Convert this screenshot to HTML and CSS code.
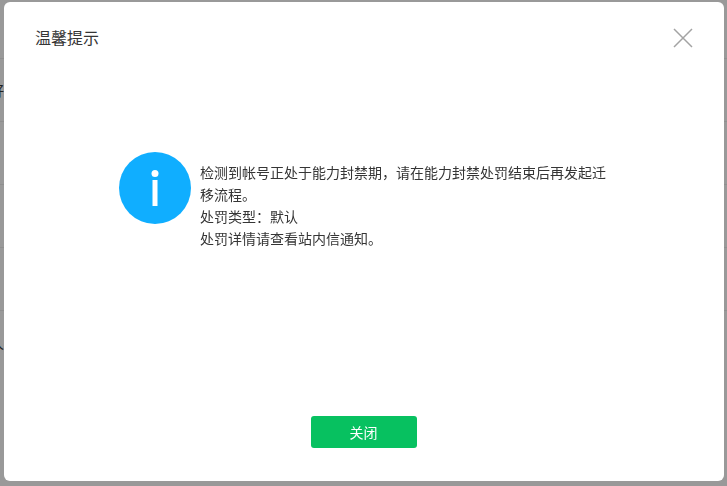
FILE: index.html
```html
<!DOCTYPE html>
<html lang="zh-CN">
<head>
<meta charset="utf-8">
<title>温馨提示</title>
<link rel="stylesheet" href="styles.css">
</head>
<body>
<div class="backdrop">
  <div class="backdrop-row"><span class="backdrop-glyph">好</span></div>
  <div class="backdrop-row"></div>
  <div class="backdrop-row"></div>
  <div class="backdrop-row"></div>
  <div class="backdrop-row"><span class="backdrop-glyph backdrop-glyph-low">人</span></div>
</div>
<div class="overlay">
  <section class="dialog">
    <header class="dialog-head">
      <h3 class="dialog-title">温馨提示</h3>
      <button class="dialog-close" aria-label="关闭">
        <svg width="20" height="20" viewBox="0 0 20 20"><path d="M1 1L19 19M19 1L1 19" stroke="#a3a3a3" stroke-width="1.5" fill="none"/></svg>
      </button>
    </header>
    <div class="dialog-body">
      <div class="info-icon">
        <svg width="72" height="72" viewBox="0 0 72 72"><circle cx="36" cy="36" r="36" fill="#10aeff"/><circle cx="36" cy="21.5" r="3.5" fill="#fff"/><rect x="33.5" y="28" width="5" height="26" fill="#fff"/></svg>
      </div>
      <div class="message">
        <p>检测到帐号正处于能力封禁期，请在能力封禁处罚结束后再发起迁移流程。</p>
        <p>处罚类型：默认</p>
        <p>处罚详情请查看站内信通知。</p>
      </div>
    </div>
    <footer class="dialog-foot">
      <button class="btn-primary">关闭</button>
    </footer>
  </section>
</div>
</body>
</html>
```
FILE: styles.css
```css
html, body {
  margin: 0;
  height: 100%;
  overflow: hidden;
}
body {
  background: #999;
  font-family: "Microsoft YaHei", "Noto Sans CJK SC", "Liberation Sans", sans-serif;
}
.backdrop {
  padding-top: 58px;
}
.backdrop-row {
  height: 62px;
  border-top: 1px solid #8f8f8f;
  position: relative;
}
.backdrop-glyph {
  position: absolute;
  left: -10px;
  top: 21px;
  font-size: 14px;
  line-height: 20px;
  color: #222;
}
.backdrop-glyph-low {
  top: 22px;
}
.overlay {
  position: fixed;
  inset: 0;
  padding: 2px 3px 5px 4px;
}
.dialog {
  height: 100%;
  box-sizing: border-box;
  background: #fff;
  border-radius: 6px;
  display: flex;
  flex-direction: column;
}
.dialog-head {
  display: flex;
  justify-content: space-between;
  align-items: flex-start;
  padding: 23px 31px 0 31px;
}
.dialog-title {
  margin: 0;
  font-size: 16px;
  font-weight: 400;
  line-height: 24px;
  color: #353535;
}
.dialog-close {
  margin-top: 3px;
  padding: 0;
  border: 0;
  background: none;
  display: flex;
}
.dialog-body {
  flex: 1;
  display: flex;
  align-items: flex-start;
  padding: 103px 116px 0 115px;
  gap: 9px;
}
.info-icon {
  flex: none;
  display: flex;
}
.message {
  font-size: 14px;
  line-height: 22px;
  color: #353535;
  padding-top: 9px;
}
.message p {
  margin: 0;
}
.dialog-foot {
  display: flex;
  justify-content: center;
  padding-bottom: 33px;
}
.btn-primary {
  width: 106px;
  height: 32px;
  border: 0;
  border-radius: 3px;
  background: #07c160;
  color: #fff;
  font-family: inherit;
  font-size: 14px;
  padding: 0 1px 0 0;
}
```
